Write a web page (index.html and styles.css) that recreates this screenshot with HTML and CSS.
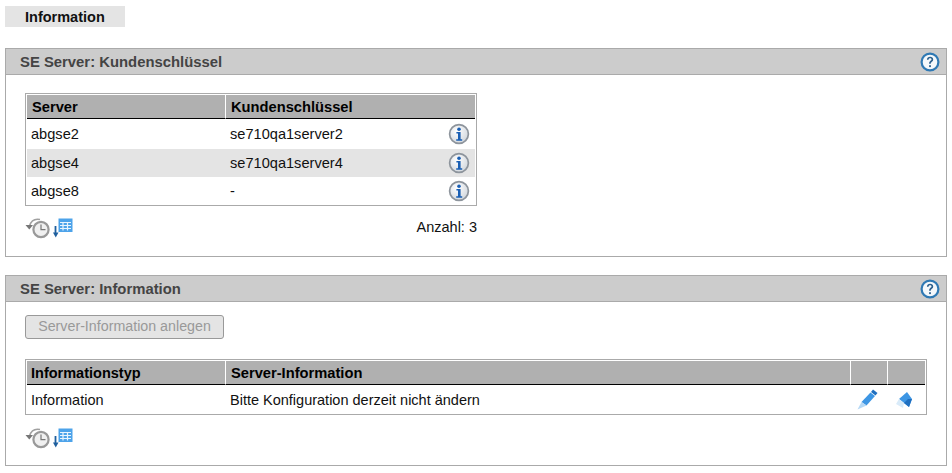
FILE: index.html
```html
<!DOCTYPE html>
<html lang="de">
<head>
    <meta charset="UTF-8">
    <title>Information</title>
    <link rel="stylesheet" href="styles.css">
</head>
<body>
    <svg class="defs" width="0" height="0">
        <defs>
            <radialGradient id="info-fill" cx="0.4" cy="0.35" r="0.75">
                <stop offset="0" stop-color="#ffffff"/>
                <stop offset="1" stop-color="#ccd2d9"/>
            </radialGradient>
            <symbol id="icon-info" viewBox="0 0 22 22">
                <circle cx="11" cy="11" r="9.4" fill="url(#info-fill)" stroke="#8d949c" stroke-width="1.7"/>
                <circle cx="11" cy="6.2" r="1.8" fill="#1a5fb4"/>
                <path d="M8.4 9h4.2v7.2h1.6v1.5H8.2v-1.5h1.8v-5.7H8.4z" fill="#1a5fb4"/>
            </symbol>
            <symbol id="icon-help" viewBox="0 0 20 20">
                <circle cx="10" cy="10" r="8.4" fill="#f4f8fb" stroke="#2f79b4" stroke-width="2.2"/>
                <path d="M6.9 7.8c0-2 1.4-3 3.2-3s3.1 1 3.1 2.6c0 2.4-2.4 2.2-2.4 4.3H9.1c0-3 2.4-2.9 2.4-4.2 0-.7-.6-1.2-1.4-1.2-.9 0-1.5.5-1.5 1.5z" fill="#2b5f8c"/>
                <rect x="9.1" y="13.2" width="1.8" height="1.9" fill="#2b5f8c"/>
            </symbol>
            <symbol id="icon-history" viewBox="0 0 26 22">
                <path d="M4.5 9C6 4 10 1.500 15 2.500" fill="none" stroke="#a0a0a0" stroke-width="1.5"/>
                <path d="M0.500 8h7.500l-3.700 4.500z" fill="#777"/>
                <circle cx="16" cy="12.500" r="7.600" fill="#f0f0f0" stroke="#999" stroke-width="2.200"/>
                <path d="M16 7.500v5.200h4.500" fill="none" stroke="#777" stroke-width="1.200"/>
            </symbol>
            <symbol id="icon-export" viewBox="0 0 20 22">
                <rect x="5.500" y="1.500" width="14" height="13.500" fill="#4da3ea"/>
                <path d="M7 5.500h11M7 8.500h11M7 11.500h11M10 5v8.500M14.500 5v8.500" stroke="#e8f4fd" stroke-width="1.200" fill="none"/>
                <path d="M2.500 9v8" stroke="#1f5f9e" stroke-width="1.800"/>
                <path d="M0 15.500h5.500l-2.750 5z" fill="#1f5f9e"/>
            </symbol>
            <symbol id="icon-edit" viewBox="0 0 22 22">
                <path d="M16 0.500l4.500 3.500-2 2.500-4.500-3.500z" fill="#1f6fc0"/>
                <path d="M13.500 3.500L18 7l-8.500 9.500-5-3.500z" fill="#3d96e4"/>
                <path d="M4.500 13l5 3.500L0.500 20.500z" fill="#b5d8f5"/>
            </symbol>
            <symbol id="icon-erase" viewBox="0 0 18 18">
                <path d="M4 8l8-7 5 7-3 8-5-4z" fill="#3d96e4"/>
                <path d="M4 8l5 4-1 5-7-4z" fill="#d9ebf9"/>
                <path d="M9 12l5 4 3-8-4 0z" fill="#1f6fc0"/>
            </symbol>
        </defs>
    </svg>

    <div class="tab-row">
        <div class="tab">Information</div>
    </div>

    <div class="panel panel-keys">
        <div class="panel-header">
            <span>SE Server: Kundenschlüssel</span>
            <svg class="help-icon"><use href="#icon-help"/></svg>
        </div>
        <div class="panel-body">
            <div class="table-box box-small">
                <table>
                    <thead>
                        <tr>
                            <th class="col-first">Server</th>
                            <th colspan="2">Kundenschlüssel</th>
                        </tr>
                    </thead>
                    <tbody>
                        <tr>
                            <td>abgse2</td>
                            <td>se710qa1server2</td>
                            <td class="col-icon"><svg class="info-icon"><use href="#icon-info"/></svg></td>
                        </tr>
                        <tr class="alt">
                            <td>abgse4</td>
                            <td>se710qa1server4</td>
                            <td class="col-icon"><svg class="info-icon"><use href="#icon-info"/></svg></td>
                        </tr>
                        <tr>
                            <td>abgse8</td>
                            <td>-</td>
                            <td class="col-icon"><svg class="info-icon"><use href="#icon-info"/></svg></td>
                        </tr>
                    </tbody>
                </table>
            </div>
            <div class="table-footer box-small">
                <div class="tools">
                    <svg class="tool-history"><use href="#icon-history"/></svg>
                    <svg class="tool-export"><use href="#icon-export"/></svg>
                </div>
                <span class="count">Anzahl: 3</span>
            </div>
        </div>
    </div>

    <div class="panel panel-info">
        <div class="panel-header">
            <span>SE Server: Information</span>
            <svg class="help-icon"><use href="#icon-help"/></svg>
        </div>
        <div class="panel-body">
            <button class="btn" disabled>Server-Information anlegen</button>
            <div class="table-box box-wide">
                <table>
                    <thead>
                        <tr>
                            <th class="col-first">Informationstyp</th>
                            <th>Server-Information</th>
                            <th class="col-action"></th>
                            <th class="col-action-last"></th>
                        </tr>
                    </thead>
                    <tbody>
                        <tr>
                            <td>Information</td>
                            <td>Bitte Konfiguration derzeit nicht ändern</td>
                            <td class="col-action"><svg class="edit-icon"><use href="#icon-edit"/></svg></td>
                            <td class="col-action-last"><svg class="erase-icon"><use href="#icon-erase"/></svg></td>
                        </tr>
                    </tbody>
                </table>
            </div>
            <div class="table-footer box-wide">
                <div class="tools">
                    <svg class="tool-history"><use href="#icon-history"/></svg>
                    <svg class="tool-export"><use href="#icon-export"/></svg>
                </div>
            </div>
        </div>
    </div>
</body>
</html>
```

FILE: styles.css
```css
/* General */
body {
    font-family: "Liberation Sans", Arial, sans-serif;
    font-size: 14.6px;
    margin: 0;
    padding: 6px 5px 0 5px;
    background: #fff;
    color: #111;
}

.defs {
    display: block;
    height: 0;
}

/* Tab */
.tab-row {
    margin-bottom: 21px;
}

.tab {
    width: 120px;
    height: 21px;
    line-height: 21px;
    box-sizing: border-box;
    padding: 1px 0 0 20px;
    background: #e4e4e4;
    font-weight: bold;
    font-size: 14.5px;
}

/* Panels */
.panel {
    border: 1px solid #aaa;
    box-sizing: border-box;
}

.panel-keys {
    height: 209px;
    margin-bottom: 18px;
}

.panel-info {
    height: 191px;
}

.panel-header {
    height: 26px;
    box-sizing: border-box;
    background: #ccc;
    border-bottom: 1px solid #aaa;
    display: flex;
    align-items: center;
    justify-content: space-between;
    padding: 0 6px 0 14px;
    font-weight: bold;
    font-size: 14.85px;
    color: #444;
}

.help-icon {
    width: 20px;
    height: 20px;
}

.panel-body {
    padding: 18px 0 0 19px;
}

.panel-info .panel-body {
    padding-top: 13px;
}

/* Tables */
.table-box {
    border: 1px solid #aaa;
    padding: 1px 1px 0;
    box-sizing: border-box;
}

.box-small {
    width: 452px;
}

.box-wide {
    width: 902px;
}

.box-wide td {
    font-size: 14.5px;
}

table {
    width: 100%;
    border-collapse: separate;
    border-spacing: 0;
    table-layout: fixed;
}

th {
    height: 23px;
    padding: 0 5px;
    background: #b0b0b0;
    border-bottom: 1px solid #000;
    border-left: 1px solid #fff;
    text-align: left;
    font-size: 14.7px;
    color: #000;
}

th:first-child {
    border-left: none;
}

td {
    height: 27px;
    padding: 0 5px 1px;
}

td:first-child {
    padding-left: 4px;
}

tbody tr:first-child td {
    height: 30px;
    padding-bottom: 0;
}

.box-wide tbody tr:first-child td {
    height: 29px;
}

.alt td {
    background: #e4e4e4;
}

.col-first {
    width: 188px;
}

.box-wide th.col-first {
    width: 189px;
    padding-left: 4px;
    font-size: 14.5px;
}

td.col-icon {
    width: 22px;
    padding-left: 0;
    padding-right: 5px;
}

th.col-action,
td.col-action {
    width: 36px;
    padding-left: 0;
    padding-right: 0;
}

th.col-action-last,
td.col-action-last {
    width: 37px;
    padding-left: 0;
    padding-right: 0;
}

.info-icon {
    width: 22px;
    height: 22px;
    display: block;
    margin-left: auto;
}

.edit-icon {
    width: 22px;
    height: 22px;
    display: block;
    margin-left: 7px;
}

.erase-icon {
    width: 18px;
    height: 18px;
    display: block;
    margin-left: 8px;
}

/* Footer under tables */
.table-footer {
    display: flex;
    justify-content: space-between;
    align-items: flex-start;
    margin-top: 11px;
}

.table-footer.box-wide {
    margin-top: 12px;
}

.tools {
    display: flex;
    gap: 2px;
}

.tool-history {
    width: 26px;
    height: 22px;
}

.tool-export {
    width: 20px;
    height: 22px;
}

.count {
    margin-top: 2px;
    font-size: 14.5px;
}

/* Button */
.btn {
    display: block;
    width: 199px;
    height: 24px;
    margin-bottom: 20px;
    padding: 0 0 2px;
    background: #e4e4e4;
    border: 1px solid #999;
    border-radius: 3px;
    font-family: "Liberation Sans", Arial, sans-serif;
    font-size: 14.25px;
    color: #999;
}
```
